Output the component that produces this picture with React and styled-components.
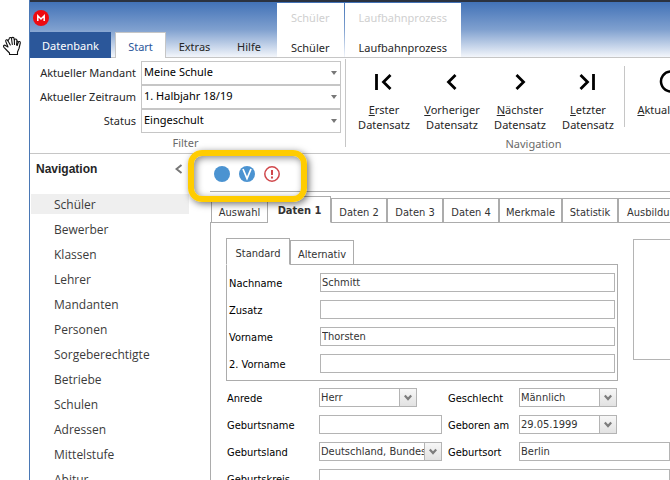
import React from "react";
import styled, { createGlobalStyle, css } from "styled-components";

const ribbonFont = `11px/16px "Noto Sans", "Open Sans", sans-serif`;
const navFont = `12px/20px "Open Sans", "Noto Sans", sans-serif`;
const formFont = `11px/16px "DejaVu Sans Condensed", "DejaVu Sans", sans-serif`;
const line = "#acacac";
const soft = "#c6c6c6";

const Global = createGlobalStyle`
  *, *::before, *::after { box-sizing: border-box; }
  html, body, #root { height: 100%; }
  body { margin: 0; background: #fff; overflow: hidden; }
  button, input, select { font: inherit; color: inherit; margin: 0; border-radius: 0; }
`;

const Screen = styled.div`
  display: grid;
  grid-template-columns: 29px minmax(0, 1fr);
  height: 100vh;
  overflow: hidden;
`;
const Margin = styled.div`
  padding: 36px 0 0 2px;
  svg { display: block; }
`;
const Window = styled.div`
  display: flex;
  flex-direction: column;
  min-width: 0;
  border-left: 1px solid #4a78b5;
  color: #262626;
`;

const TitleBar = styled.header`
  display: flex;
  flex: none;
  height: 58px;
  border-top: 2px solid #2b3240;
  border-bottom: 1px solid ${soft};
  background: linear-gradient(#4272b7, #7fa0cf 50%, #f3f6fb);
  font: ${ribbonFont};
`;
const TitleLeft = styled.div`
  display: flex;
  flex: none;
  flex-direction: column;
  justify-content: space-between;
  width: 247px;
`;
const Logo = styled.div`
  padding: 8px 3px 0;
  svg { display: block; }
`;
const MenuTabs = styled.nav`
  display: flex;
  margin-bottom: -1px;
`;
const MenuTab = styled.button`
  height: 26px;
  padding: 2px 0 0;
  border: 1px solid transparent;
  border-bottom: 0;
  background: none;
  width: ${(p) => p.$w}px;
  ${(p) => p.$kind === "file" && css`background: #2b579a; color: #fff; margin-right: 4px; padding: 0;`}
  ${(p) => p.$kind === "active" && css`background: #fff; color: #2b579a; border-color: ${soft}; margin-right: 1px;`}
`;
const ContextTab = styled.div`
  display: flex;
  flex: none;
  flex-direction: column;
  justify-content: space-between;
  margin: 1px 1px 0 0;
  padding: 7px 14px 1px;
  background: #fff;
  text-align: center;
`;
const ContextTitle = styled.span`color: #cfcfcf;`;
const ContextButton = styled.button`
  height: 16px;
  padding: 0;
  border: 0;
  background: none;
`;

const Ribbon = styled.section`
  display: flex;
  flex: none;
  height: 96px;
  border-bottom: 1px solid ${soft};
  font: ${ribbonFont};
`;
const FilterGroup = styled.div`
  display: flex;
  flex: none;
  flex-direction: column;
  gap: 2px;
  width: 316px;
  height: 88px;
  margin-top: 1px;
  padding: 2px 4px 0 0;
  border-right: 1px solid ${soft};
`;
const FilterGrid = styled.div`
  display: grid;
  grid-template-columns: 106px minmax(0, 1fr);
  grid-auto-rows: 24px;
  column-gap: 5px;
  align-items: center;
  label { text-align: right; }
`;
const FilterBox = styled.div`
  position: relative;
  height: 24px;
  color: #000;
  select {
    appearance: none;
    width: 100%;
    height: 100%;
    padding: 0 20px 2px 2px;
    border: 1px solid ${soft};
    background: #fff;
  }
  svg { position: absolute; right: 4px; top: 10px; pointer-events: none; }
`;
const Caption = styled.div`
  height: 16px;
  color: #6a6a6a;
  text-align: center;
`;
const NavGroup = styled.div`
  display: grid;
  flex: none;
  grid-template-columns: repeat(4, 68px) 3px 92px;
  grid-template-rows: 68px 16px;
  row-gap: 2px;
  align-items: start;
  padding: 8px 0 0 4px;
  ${Caption} { grid-column: 1 / 7; }
`;
const NavSeparator = styled.div`
  width: 1px;
  height: 61px;
  margin-left: 2px;
  background: ${soft};
`;
const NavButton = styled.button`
  display: flex;
  flex-direction: column;
  align-items: center;
  padding: 4px 0 0;
  border: 0;
  background: none;
  line-height: 15px;
  svg { display: block; margin-bottom: 8px; }
`;

const Body = styled.main`
  display: grid;
  grid-template-columns: 180px minmax(0, 1fr);
  flex: 1;
  min-height: 0;
`;
const Sidebar = styled.aside`
  overflow: hidden;
  font: ${navFont};
`;
const SideHead = styled.div`
  display: flex;
  justify-content: space-between;
  align-items: center;
  height: 40px;
  padding: 0 27px 10px 6px;
  font: bold 12px/20px "Liberation Sans", Arial, sans-serif;
  button { display: flex; padding: 0; border: 0; background: none; }
`;
const SideList = styled.ul`
  display: flex;
  flex-direction: column;
  gap: 5px;
  margin: 0;
  padding: 0 21px 0 1px;
  list-style: none;
`;
const SideLink = styled.a`
  display: block;
  height: 20px;
  padding: 1px 0 0 23px;
  color: #3b3b3b;
  text-decoration: none;
  background: ${(p) => (p.$on ? "#efefef" : "none")};
`;

const Content = styled.section`
  position: relative;
  display: flex;
  flex-direction: column;
  min-width: 0;
  font: ${formFont};
`;
const Toolbar = styled.div`
  display: flex;
  gap: 9px;
  flex: none;
  height: 38px;
  padding: 12px 4px 0;
  border-bottom: 1px solid ${line};
  svg { display: block; }
`;
const Highlight = styled.div`
  position: absolute;
  left: -22px;
  top: -4px;
  z-index: 2;
  width: 119px;
  height: 52px;
  border: 6px solid #fc0;
  border-radius: 14px;
  box-shadow: 2px 2px 7px rgba(0, 0, 0, 0.55), inset 2px 2px 7px rgba(0, 0, 0, 0.45);
  pointer-events: none;
`;
const Tabs = styled.div`
  display: flex;
  flex: none;
  align-items: flex-end;
  height: ${(p) => p.$h}px;
  padding-left: ${(p) => p.$indent}px;
  background: linear-gradient(${line}, ${line}) bottom / 100% 1px no-repeat;
`;
const Tab = styled.button`
  flex: none;
  width: ${(p) => p.$w}px;
  height: ${(p) => (p.$on ? 27 : 25)}px;
  padding: 4px 0 0;
  border: 1px solid ${line};
  background: #fff;
  color: #333;
  white-space: nowrap;
  ${(p) => p.$on && css`border-bottom-color: #fff; border-left-color: ${p.$edge ? line : "#fff"};`}
  ${(p) => p.$bold && css`font-weight: bold; padding-top: 2px;`}
  ${(p) => p.$cut && css`text-align: left; padding-left: 8px;`}
`;
const Panel = styled.div`
  flex: 1;
  min-height: 0;
  overflow: hidden;
  padding: 15px 0 0 15px;
  border-left: 1px solid ${line};
`;
const Upper = styled.div`
  display: flex;
  align-items: flex-start;
`;
const NameGroup = styled.div`
  flex: none;
  width: 392px;
`;
const NameGrid = styled.div`
  display: grid;
  grid-template-columns: 91px minmax(0, 1fr);
  grid-auto-rows: 19px;
  row-gap: 8px;
  padding: 8px 2px 7px 2px;
  border: 1px solid ${line};
  border-top: 0;
`;
const Photo = styled.div`
  flex: 1 0 30px;
  height: 121px;
  margin: 1px 0 0 15px;
  border: 1px solid #b4b4b4;
  border-right: 0;
`;
const DetailGrid = styled.div`
  display: grid;
  grid-template-columns: 92px 123px 77px minmax(98px, 1fr);
  grid-auto-rows: 19px;
  row-gap: 8px;
  padding: 7px 0 0 1px;
`;
const Label = styled.label`
  padding-top: 3px;
  color: #000;
  white-space: nowrap;
  padding-left: ${(p) => (p.$inset ? 6 : 0)}px;
`;
const Field = styled.input`
  width: 100%;
  min-width: 0;
  height: 19px;
  padding: 0 1px;
  border: 1px solid #b4b4b4;
  background: #fff;
  color: #333;
  outline: 0;
  grid-column: ${(p) => (p.$wide ? "2 / 5" : "auto")};
`;
const Combo = styled.div`
  display: grid;
  grid-template-columns: minmax(0, 1fr) 17px;
  width: ${(p) => (p.$wide ? "123px" : "98px")};
  height: 19px;
  border: 1px solid #b4b4b4;
  color: #333;
  select, input {
    appearance: none;
    width: 100%;
    height: 17px;
    padding: 0 0 0 1px;
    border: 0;
    background: #fff;
    outline: 0;
  }
`;
const Drop = styled.button`
  display: flex;
  align-items: center;
  justify-content: center;
  padding: 0;
  border: 0;
  border-left: 1px solid #b4b4b4;
  background: linear-gradient(#f7f7f7, #e2e2e2);
`;

const filters = [
  ["mandant", "Aktueller Mandant", "Meine Schule"],
  ["zeitraum", "Aktueller Zeitraum", "1. Halbjahr 18/19"],
  ["status", "Status", "Eingeschult"],
];
const records = [
  ["E", "rster", "first"],
  ["V", "orheriger", "prev"],
  ["N", "ächster", "next"],
  ["L", "etzter", "last"],
];
const sections = ["Schüler", "Bewerber", "Klassen", "Lehrer", "Mandanten", "Personen", "Sorgeberechtigte", "Betriebe", "Schulen", "Adressen", "Mittelstufe", "Abitur"];
const tabs = [["Auswahl", 57], ["Daten 1", 63], ["Daten 2", 56], ["Daten 3", 56], ["Daten 4", 56], ["Merkmale", 63], ["Statistik", 56], ["Ausbildung", 75]];
const names = [["nachname", "Nachname", "Schmitt"], ["zusatz", "Zusatz", ""], ["vorname", "Vorname", "Thorsten"], ["vorname2", "2. Vorname", ""]];

const glyphs = {
  first: "M8.500 8v16M22.500 9l-7 7 7 7",
  prev: "M19.500 9l-7 7 7 7",
  next: "M12.500 9l7 7-7 7",
  last: "M8.500 9l7 7-7 7M21.500 8v16",
  refresh: "M24 9.500A10 10 0 1 0 26 16M26 5v6.500h-7",
};
const NavIcon = ({ kind }) => (
  <svg width="32" height="24" viewBox="0 4 32 24" fill="none" stroke="#000" strokeWidth={kind === "refresh" ? 2.5 : 2.8}>
    <path d={glyphs[kind]} />
  </svg>
);
const Chevron = () => (
  <svg width="8" height="7" viewBox="0 0 8 7" fill="none" stroke="#7d7d7d" strokeWidth="2.2">
    <path d="M.8 1.500L4 5l3.200-3.500" />
  </svg>
);
const Hand = () => (
  <svg width="20" height="20" viewBox="0 0 20 20" fill="#fff" stroke="#111" strokeWidth="1.1" strokeLinejoin="round" strokeLinecap="round">
    <path d="M7.500 18.500v-1.500L5 14.500l-3-3.200c-1.300-1.500.3-2.800 1.800-1.600L6 11 3.800 5.500C3.200 3.700 5.200 3 5.900 4.700L7.200 3c-.3-1.800 1.900-2.100 2.300-.5.300-1.700 2.600-1.500 2.600.3l.4 1.200c.4-1.500 2.500-1.200 2.400.6l1.300 1.600c.6-1.300 2.400-.7 2.100.8L17 12.500 15.500 16v2.500z" stroke="#111" />
    <path d="M5.900 4.700L8.300 9M9.500 2.500l.8 6M12.300 3.500l.2 5M14.900 5l-.4 4M16.200 6.500l-1 3" fill="none" />
  </svg>
);

function Picker({ id, value, wide }) {
  return (
    <Combo $wide={wide}>
      <select id={id} defaultValue={value}><option>{value}</option></select>
      <Drop type="button" aria-label="Liste öffnen"><Chevron /></Drop>
    </Combo>
  );
}

export default function App() {
  return (
    <Screen>
      <Global />
      <Margin><Hand /></Margin>
      <Window>
        <TitleBar>
          <TitleLeft>
            <Logo>
              <svg width="16" height="16" viewBox="0 0 16 16">
                <circle cx="8" cy="8" r="8" fill="#ee0a10" />
                <path d="M4.800 11V5.800L8 9l3.200-3.200V11" fill="none" stroke="#fff" strokeWidth="1.500" />
              </svg>
            </Logo>
            <MenuTabs>
              <MenuTab $w={81} $kind="file">Datenbank</MenuTab>
              <MenuTab $w={51} $kind="active">Start</MenuTab>
              <MenuTab $w={55}>Extras</MenuTab>
              <MenuTab $w={54}>Hilfe</MenuTab>
            </MenuTabs>
          </TitleLeft>
          {["Schüler", "Laufbahnprozess"].map((name) => (
            <ContextTab key={name}>
              <ContextTitle>{name}</ContextTitle>
              <ContextButton>{name}</ContextButton>
            </ContextTab>
          ))}
        </TitleBar>

        <Ribbon>
          <FilterGroup>
            <FilterGrid>
              {filters.map(([id, label, value]) => (
                <React.Fragment key={id}>
                  <label htmlFor={id}>{label}</label>
                  <FilterBox>
                    <select id={id} defaultValue={value}><option>{value}</option></select>
                    <svg width="6" height="4" viewBox="0 0 6 4"><path d="M0 0h6L3 4z" fill="#777" /></svg>
                  </FilterBox>
                </React.Fragment>
              ))}
            </FilterGrid>
            <Caption>Filter</Caption>
          </FilterGroup>
          <NavGroup>
            {records.map(([key, rest, icon]) => (
              <NavButton key={icon}>
                <NavIcon kind={icon} />
                <span><u>{key}</u>{rest}</span>
                <span>Datensatz</span>
              </NavButton>
            ))}
            <NavSeparator />
            <NavButton>
              <NavIcon kind="refresh" />
              <span><u>A</u>ktualisieren</span>
            </NavButton>
            <Caption>Navigation</Caption>
          </NavGroup>
        </Ribbon>

        <Body>
          <Sidebar>
            <SideHead>
              <span>Navigation</span>
              <button aria-label="Einklappen">
                <svg width="8" height="10" viewBox="0 0 8 10" fill="none" stroke="#777" strokeWidth="2"><path d="M6.500 1l-5 4 5 4" /></svg>
              </button>
            </SideHead>
            <SideList>
              {sections.map((name, i) => (
                <li key={name}><SideLink href="#" $on={i === 0}>{name}</SideLink></li>
              ))}
            </SideList>
          </Sidebar>

          <Content>
            <Toolbar>
              <svg width="16" height="16" viewBox="0 0 16 16"><circle cx="8" cy="8" r="8" fill="#4b93d1" /></svg>
              <svg width="16" height="16" viewBox="0 0 16 16">
                <circle cx="8" cy="8" r="8" fill="#4b93d1" />
                <path d="M4 3l4 9.500L12 3" fill="none" stroke="#fff" strokeWidth="1.700" />
              </svg>
              <svg width="16" height="16" viewBox="0 0 16 16">
                <circle cx="8" cy="8" r="7.200" fill="#fff" stroke="#d0474b" strokeWidth="1.500" />
                <path d="M8 4v5M8 10.500v2" stroke="#d0474b" strokeWidth="2" />
              </svg>
            </Toolbar>
            <Highlight />
            <Tabs $h={31} $indent={1}>
              {tabs.map(([name, w], i) => (
                <Tab key={name} $w={w} $on={i === 1} $bold={i === 1} $cut={i === 7}>{name}</Tab>
              ))}
            </Tabs>
            <Panel>
              <Upper>
                <NameGroup>
                  <Tabs $h={27} $indent={0}>
                    <Tab $w={64} $on $edge>Standard</Tab>
                    <Tab $w={64}>Alternativ</Tab>
                  </Tabs>
                  <NameGrid>
                    {names.map(([id, label, value]) => (
                      <React.Fragment key={id}>
                        <Label htmlFor={id}>{label}</Label>
                        <Field id={id} defaultValue={value} />
                      </React.Fragment>
                    ))}
                  </NameGrid>
                </NameGroup>
                <Photo />
              </Upper>
              <DetailGrid>
                <Label htmlFor="anrede">Anrede</Label>
                <Picker id="anrede" value="Herr" />
                <Label htmlFor="geschlecht" $inset>Geschlecht</Label>
                <Picker id="geschlecht" value="Männlich" />
                <Label htmlFor="geburtsname">Geburtsname</Label>
                <Field id="geburtsname" />
                <Label htmlFor="geboren" $inset>Geboren am</Label>
                <Combo>
                  <input id="geboren" defaultValue="29.05.1999" />
                  <Drop type="button" aria-label="Kalender öffnen"><Chevron /></Drop>
                </Combo>
                <Label htmlFor="geburtsland">Geburtsland</Label>
                <Picker id="geburtsland" value="Deutschland, Bundes" wide />
                <Label htmlFor="geburtsort" $inset>Geburtsort</Label>
                <Field id="geburtsort" defaultValue="Berlin" />
                <Label htmlFor="geburtskreis">Geburtskreis</Label>
                <Field id="geburtskreis" $wide />
              </DetailGrid>
            </Panel>
          </Content>
        </Body>
      </Window>
    </Screen>
  );
}
